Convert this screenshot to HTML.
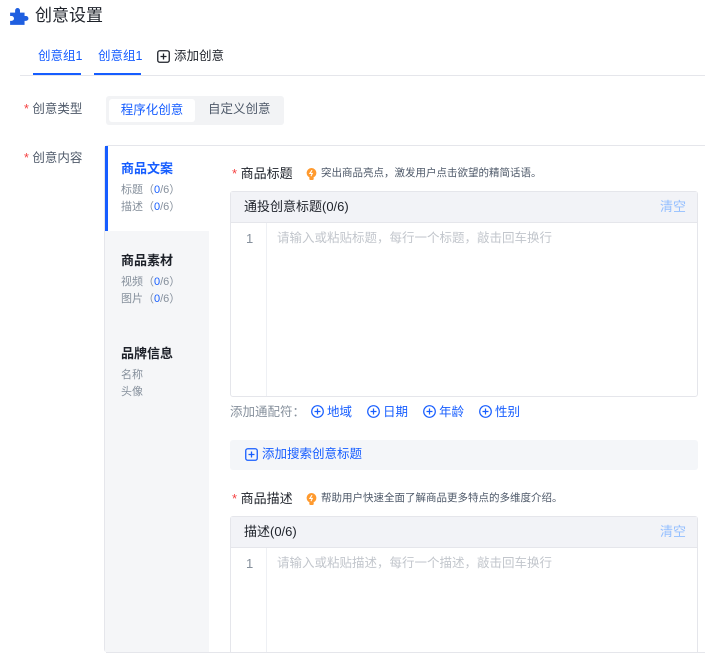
<!DOCTYPE html>
<html><head><meta charset="utf-8"><style>
*{box-sizing:border-box;margin:0;padding:0}
body{width:705px;height:656px;overflow:hidden;background:#fff;font-family:"Liberation Sans","Noto Sans CJK SC",sans-serif;color:#1d2129;position:relative}
.abs{position:absolute}
.t{font-size:12px;white-space:nowrap;line-height:1.2}
.blue{color:#165dff}
.gray{color:#86909c}
.star{color:#f53f3f}
.wc{position:absolute;font-size:12.5px;color:#165dff;white-space:nowrap;line-height:1.2}
.wc svg{vertical-align:-2px;margin-right:3px}
</style></head><body>
<svg class="abs" style="left:9px;top:6px" width="20" height="20" viewBox="0 0 18 18"><path d="M1 6h4.5V4a2.2 2.2 0 0 1 4.4 0v2h4.1v3h1.3a2.2 2.2 0 0 1 0 4.4H14V17H1v-3.6h1.3a2.2 2.2 0 0 0 0-4.4H1z" fill="#1f5fe0"/></svg>
<div class="abs t" style="left:35px;top:6px;font-size:17px">创意设置</div>

<div class="abs t blue" style="left:38px;top:49px;font-size:12.5px">创意组1</div>
<div class="abs" style="left:33px;top:73px;width:48px;height:2px;background:#165dff"></div>
<div class="abs t blue" style="left:98px;top:49px;font-size:12.5px">创意组1</div>
<div class="abs" style="left:94px;top:73px;width:47px;height:2px;background:#165dff"></div>
<svg class="abs" style="left:157px;top:50px" width="13" height="13" viewBox="0 0 13 13"><rect x="0.75" y="0.75" width="11.5" height="11.5" rx="2" fill="none" stroke="#1d2129" stroke-width="1.3"/><path d="M6.5 3.5v6M3.5 6.5h6" stroke="#1d2129" stroke-width="1.3"/></svg>
<div class="abs t" style="left:174px;top:49px;font-size:12.5px;color:#1d2129">添加创意</div>
<div class="abs" style="left:20px;top:75px;width:685px;height:1px;background:#e5e6eb"></div>

<div class="abs t" style="left:24px;top:102px;font-size:12.5px;color:#4e5969"><span class="star">*</span> 创意类型</div>
<div class="abs" style="left:106px;top:96px;width:178px;height:29px;background:#f2f3f5;border-radius:3px"></div>
<div class="abs t blue" style="left:109px;top:99px;width:86px;height:23px;background:#fff;border-radius:3px;text-align:center;line-height:23px;font-size:12.5px">程序化创意</div>
<div class="abs t" style="left:208px;top:102px;font-size:12.5px;color:#4e5969">自定义创意</div>

<div class="abs t" style="left:24px;top:151px;font-size:12.5px;color:#4e5969"><span class="star">*</span> 创意内容</div>

<div class="abs" style="left:104px;top:145px;width:610px;height:508px;border:1px solid #e5e6eb;border-radius:4px;background:#fff"></div>
<div class="abs" style="left:105px;top:146px;width:104px;height:506px;background:#f5f6f8"></div>
<div class="abs" style="left:105px;top:146px;width:104px;height:85px;background:#fff;border-left:3px solid #165dff"></div>
<div class="abs t blue" style="left:121px;top:161px;font-size:13px;font-weight:bold">商品文案</div>
<div class="abs t gray" style="left:121px;top:184px;font-size:11px">标题（<span class="blue">0</span>/6）</div>
<div class="abs t gray" style="left:121px;top:201px;font-size:11px">描述（<span class="blue">0</span>/6）</div>
<div class="abs t" style="left:121px;top:253px;font-size:13px;font-weight:bold">商品素材</div>
<div class="abs t gray" style="left:121px;top:276px;font-size:11px">视频（<span class="blue">0</span>/6）</div>
<div class="abs t gray" style="left:121px;top:293px;font-size:11px">图片（<span class="blue">0</span>/6）</div>
<div class="abs t" style="left:121px;top:346px;font-size:13px;font-weight:bold">品牌信息</div>
<div class="abs t gray" style="left:121px;top:369px;font-size:11px">名称</div>
<div class="abs t gray" style="left:121px;top:386px;font-size:11px">头像</div>

<div class="abs t" style="left:232px;top:166px;font-size:13px"><span class="star">*</span> 商品标题</div>
<svg class="abs" style="left:306px;top:168px" width="11" height="12" viewBox="0 0 10 11"><circle cx="5" cy="4.5" r="4.5" fill="#ff9a2e"/><rect x="3" y="8" width="4" height="3" rx="1" fill="#ff9a2e"/><path d="M5.5 2L3.5 5h2.2L4.5 7.5" stroke="#fff" stroke-width="1" fill="none"/></svg>
<div class="abs t" style="left:321px;top:167px;font-size:10.5px;color:#4e5969">突出商品亮点，激发用户点击欲望的精简话语。</div>

<div class="abs" style="left:230px;top:191px;width:468px;height:206px;border:1px solid #e5e6eb;border-radius:3px;background:#fff"></div>
<div class="abs" style="left:231px;top:192px;width:466px;height:31px;background:#f2f3f7;border-bottom:1px solid #e5e6eb"></div>
<div class="abs t" style="left:244px;top:199px;font-size:13px;color:#1d2129">通投创意标题(0/6)</div>
<div class="abs t" style="left:660px;top:199px;font-size:13px;color:#94bfff">清空</div>
<div class="abs" style="left:266px;top:223px;width:1px;height:173px;background:#eef0f4"></div>
<div class="abs t" style="left:246px;top:231px;font-size:13px;color:#86909c">1</div>
<div class="abs t" style="left:277px;top:231px;font-size:12.5px;color:#c2c6cc">请输入或粘贴标题，每行一个标题，敲击回车换行</div>

<div class="abs t" style="left:230px;top:405px;font-size:12.5px;color:#86909c">添加通配符：</div>
<div class="wc" style="left:311px;top:405px"><svg width="13" height="13" viewBox="0 0 13 13"><circle cx="6.5" cy="6.5" r="5.8" fill="none" stroke="#165dff" stroke-width="1.2"/><path d="M6.5 3.5v6M3.5 6.5h6" stroke="#165dff" stroke-width="1.2"/></svg>地域</div>
<div class="wc" style="left:367px;top:405px"><svg width="13" height="13" viewBox="0 0 13 13"><circle cx="6.5" cy="6.5" r="5.8" fill="none" stroke="#165dff" stroke-width="1.2"/><path d="M6.5 3.5v6M3.5 6.5h6" stroke="#165dff" stroke-width="1.2"/></svg>日期</div>
<div class="wc" style="left:423px;top:405px"><svg width="13" height="13" viewBox="0 0 13 13"><circle cx="6.5" cy="6.5" r="5.8" fill="none" stroke="#165dff" stroke-width="1.2"/><path d="M6.5 3.5v6M3.5 6.5h6" stroke="#165dff" stroke-width="1.2"/></svg>年龄</div>
<div class="wc" style="left:479px;top:405px"><svg width="13" height="13" viewBox="0 0 13 13"><circle cx="6.5" cy="6.5" r="5.8" fill="none" stroke="#165dff" stroke-width="1.2"/><path d="M6.5 3.5v6M3.5 6.5h6" stroke="#165dff" stroke-width="1.2"/></svg>性别</div>

<div class="abs" style="left:230px;top:440px;width:468px;height:30px;background:#f4f6f9;border-radius:3px"></div>
<svg class="abs" style="left:245px;top:448px" width="13" height="13" viewBox="0 0 13 13"><rect x="0.75" y="0.75" width="11.5" height="11.5" rx="2" fill="none" stroke="#165dff" stroke-width="1.3"/><path d="M6.5 3.5v6M3.5 6.5h6" stroke="#165dff" stroke-width="1.3"/></svg>
<div class="abs t blue" style="left:262px;top:447px;font-size:12.5px">添加搜索创意标题</div>

<div class="abs t" style="left:232px;top:491px;font-size:13px"><span class="star">*</span> 商品描述</div>
<svg class="abs" style="left:306px;top:493px" width="11" height="12" viewBox="0 0 10 11"><circle cx="5" cy="4.5" r="4.5" fill="#ff9a2e"/><rect x="3" y="8" width="4" height="3" rx="1" fill="#ff9a2e"/><path d="M5.5 2L3.5 5h2.2L4.5 7.5" stroke="#fff" stroke-width="1" fill="none"/></svg>
<div class="abs t" style="left:321px;top:492px;font-size:10.5px;color:#4e5969">帮助用户快速全面了解商品更多特点的多维度介绍。</div>

<div class="abs" style="left:230px;top:516px;width:468px;height:140px;border:1px solid #e5e6eb;border-radius:3px;background:#fff"></div>
<div class="abs" style="left:231px;top:517px;width:466px;height:31px;background:#f2f3f7;border-bottom:1px solid #e5e6eb"></div>
<div class="abs t" style="left:244px;top:524px;font-size:13px">描述(0/6)</div>
<div class="abs t" style="left:660px;top:524px;font-size:13px;color:#94bfff">清空</div>
<div class="abs" style="left:266px;top:548px;width:1px;height:104px;background:#eef0f4"></div>
<div class="abs t" style="left:246px;top:556px;font-size:13px;color:#86909c">1</div>
<div class="abs t" style="left:277px;top:556px;font-size:12.5px;color:#c2c6cc">请输入或粘贴描述，每行一个描述，敲击回车换行</div>
<div class="abs" style="left:104px;top:652px;width:601px;height:4px;background:#fff"></div>
<div class="abs" style="left:106px;top:652px;width:599px;height:1px;background:#e5e6eb"></div>
</body></html>
